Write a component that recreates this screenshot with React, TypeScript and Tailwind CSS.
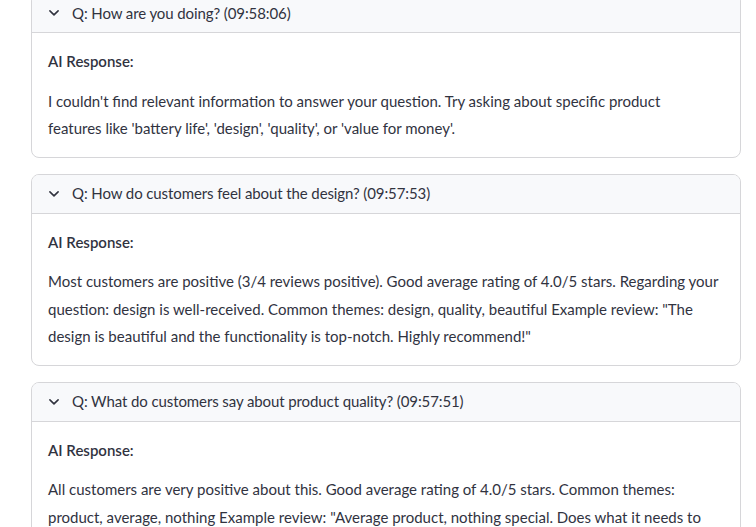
type Entry = {
  question: string;
  time: string;
  lines: string[];
};

const entries: Entry[] = [
  {
    question: 'How are you doing?',
    time: '09:58:06',
    lines: [
      "I couldn't find relevant information to answer your question. Try asking about specific product",
      "features like 'battery life', 'design', 'quality', or 'value for money'.",
    ],
  },
  {
    question: 'How do customers feel about the design?',
    time: '09:57:53',
    lines: [
      'Most customers are positive (3/4 reviews positive). Good average rating of 4.0/5 stars. Regarding your',
      'question: design is well-received. Common themes: design, quality, beautiful Example review: "The',
      'design is beautiful and the functionality is top-notch. Highly recommend!"',
    ],
  },
  {
    question: 'What do customers say about product quality?',
    time: '09:57:51',
    lines: [
      'All customers are very positive about this. Good average rating of 4.0/5 stars. Common themes:',
      'product, average, nothing Example review: "Average product, nothing special. Does what it needs to',
      'do."',
    ],
  },
];

const Chevron = () => (
  <svg width="12" height="8" viewBox="0 0 12 8" fill="none" className="shrink-0">
    <path d="M1.9 1.9 6 5.9 10.1 1.9" stroke="#31333f" strokeWidth="1.6" strokeLinecap="round" strokeLinejoin="round" />
  </svg>
);

const HistoryCard = ({ entry }: { entry: Entry }) => (
  <div className="overflow-hidden rounded-lg border border-[#d6d6d9] bg-white">
    <div className="flex h-[39px] items-center gap-[12px] border-b border-[#d6d6d9] bg-[#f8f9fb] pl-[16px]">
      <Chevron />
      <span className="whitespace-nowrap tracking-[-0.1px]">
        Q: {entry.question} ({entry.time})
      </span>
    </div>
    <div className="px-[16px] pt-[15px] pb-[14px] leading-[27.5px]">
      <p className="mb-[12px] font-semibold">AI Response:</p>
      <p>
        {entry.lines.map((line, i) => (
          <span key={i} className="block whitespace-nowrap">
            {line}
          </span>
        ))}
      </p>
    </div>
  </div>
);

export default function App() {
  return (
    <div
      className="h-[527px] overflow-hidden bg-white text-[15px] text-[#31333f]"
      style={{ fontFamily: 'Lato, "Noto Sans", sans-serif' }}
    >
      <div className="-mt-[7px] flex flex-col gap-[16px] pl-[31px] pr-[15px]">
        {entries.map((e) => (
          <HistoryCard key={e.time} entry={e} />
        ))}
      </div>
    </div>
  );
}
